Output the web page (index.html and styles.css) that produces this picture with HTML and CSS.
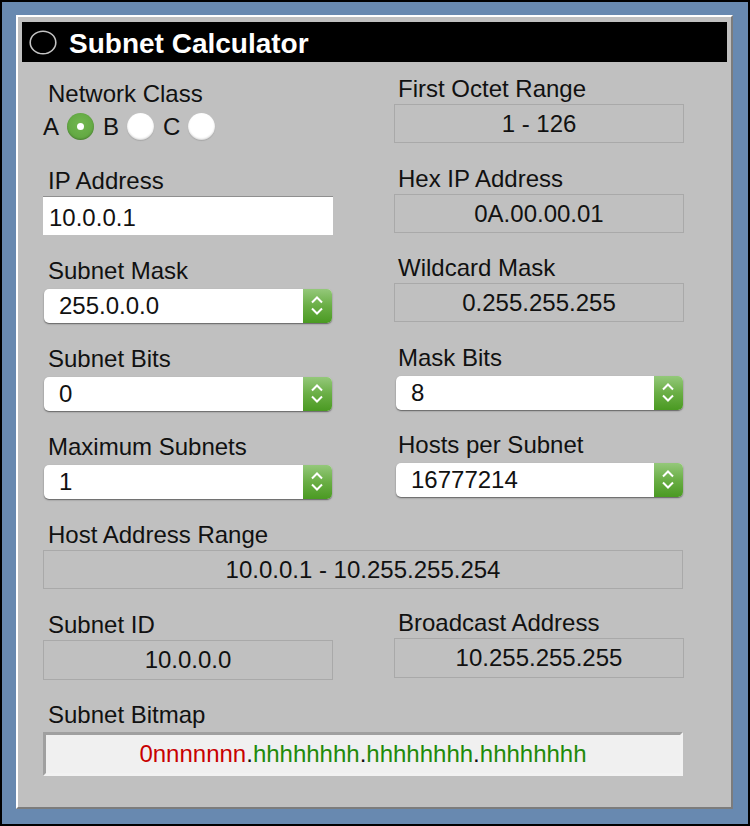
FILE: index.html
```html
<!DOCTYPE html>
<html>
<head>
<meta charset="utf-8">
<title>Subnet Calculator</title>
<link rel="stylesheet" href="styles.css">
</head>
<body>
<div class="frame">
  <div class="panel">
    <div class="header">
      <svg class="logo" width="28" height="25" viewBox="0 0 28 25"><ellipse cx="14" cy="12.5" rx="12.8" ry="11.3" fill="none" stroke="#c4c4c4" stroke-width="1.6"/></svg>
      <span class="title">Subnet Calculator</span>
    </div>
    <div class="content">
      <div class="top">
        <div class="col col-left">
          <div class="field">
            <div class="label">Network Class</div>
            <div class="radios">
              <span class="rlabel">A</span><span class="radio on"></span>
              <span class="rlabel">B</span><span class="radio"></span>
              <span class="rlabel">C</span><span class="radio"></span>
            </div>
          </div>
          <div class="field field-ip">
            <div class="label">IP Address</div>
            <div class="input">10.0.0.1</div>
          </div>
          <div class="field">
            <div class="label">Subnet Mask</div>
            <div class="select"><span class="value">255.0.0.0</span><span class="btn"><svg width="29" height="34" viewBox="0 0 29 34"><path d="M9 13.5 L14 8.5 L19 13.5 M9 19.5 L14 24.5 L19 19.5" fill="none" stroke="#fff" stroke-width="2"/></svg></span></div>
          </div>
          <div class="field">
            <div class="label">Subnet Bits</div>
            <div class="select"><span class="value">0</span><span class="btn"><svg width="29" height="34" viewBox="0 0 29 34"><path d="M9 13.5 L14 8.5 L19 13.5 M9 19.5 L14 24.5 L19 19.5" fill="none" stroke="#fff" stroke-width="2"/></svg></span></div>
          </div>
          <div class="field">
            <div class="label">Maximum Subnets</div>
            <div class="select"><span class="value">1</span><span class="btn"><svg width="29" height="34" viewBox="0 0 29 34"><path d="M9 13.5 L14 8.5 L19 13.5 M9 19.5 L14 24.5 L19 19.5" fill="none" stroke="#fff" stroke-width="2"/></svg></span></div>
          </div>
        </div>
        <div class="col col-right">
          <div class="field">
            <div class="label">First Octet Range</div>
            <div class="output">1 - 126</div>
          </div>
          <div class="field">
            <div class="label">Hex IP Address</div>
            <div class="output">0A.00.00.01</div>
          </div>
          <div class="field">
            <div class="label">Wildcard Mask</div>
            <div class="output">0.255.255.255</div>
          </div>
          <div class="field">
            <div class="label">Mask Bits</div>
            <div class="select select-r"><span class="value">8</span><span class="btn"><svg width="29" height="34" viewBox="0 0 29 34"><path d="M9 13.5 L14 8.5 L19 13.5 M9 19.5 L14 24.5 L19 19.5" fill="none" stroke="#fff" stroke-width="2"/></svg></span></div>
          </div>
          <div class="field">
            <div class="label">Hosts per Subnet</div>
            <div class="select select-r"><span class="value">16777214</span><span class="btn"><svg width="29" height="34" viewBox="0 0 29 34"><path d="M9 13.5 L14 8.5 L19 13.5 M9 19.5 L14 24.5 L19 19.5" fill="none" stroke="#fff" stroke-width="2"/></svg></span></div>
          </div>
        </div>
      </div>
      <div class="field full field-range">
        <div class="label">Host Address Range</div>
        <div class="output">10.0.0.1 - 10.255.255.254</div>
      </div>
      <div class="row2">
        <div class="field half">
          <div class="label">Subnet ID</div>
          <div class="output tall">10.0.0.0</div>
        </div>
        <div class="field half half-r">
          <div class="label">Broadcast Address</div>
          <div class="output tall">10.255.255.255</div>
        </div>
      </div>
      <div class="field full field-bitmap">
        <div class="label">Subnet Bitmap</div>
        <div class="bitmap"><span class="net">0nnnnnnn</span>.<span class="host">hhhhhhhh</span>.<span class="host">hhhhhhhh</span>.<span class="host">hhhhhhhh</span></div>
      </div>
    </div>
  </div>
</div>
</body>
</html>
```

FILE: styles.css
```css
html, body {
  margin: 0;
  padding: 0;
  background: #000;
}
body {
  font-family: "Liberation Sans", Arial, Helvetica, sans-serif;
  color: #111;
}
.frame {
  width: 750px;
  height: 826px;
  box-sizing: border-box;
  border: 2px solid #000;
  background: #6889b0;
  padding: 13px 0 0 14px;
}
.panel {
  width: 717px;
  height: 794px;
  box-sizing: border-box;
  border: 2px solid;
  border-color: #ffffff #7c7c7c #7c7c7c #ffffff;
  background: #c0c0c0;
  padding: 5px 4px 0 4px;
}
.header {
  height: 40px;
  background: #000;
  display: flex;
  align-items: center;
  padding-left: 7px;
}
.logo {
  display: block;
}
.title {
  color: #fff;
  font-weight: bold;
  font-size: 28px;
  line-height: 36px;
  padding-top: 4px;
  margin-left: 12px;
}
.content {
  padding-left: 21px;
}
.top {
  display: flex;
  gap: 61px;
  margin-top: 15px;
}
.col {
  width: 290px;
  display: flex;
  flex-direction: column;
}
.col-left {
  padding-top: 5px;
  gap: 24px;
}
.col-right {
  gap: 23.5px;
}
.field-ip {
  margin-top: 5px;
}
.label {
  font-size: 24px;
  line-height: 24px;
  height: 24px;
  padding-left: 5px;
  white-space: nowrap;
}
.col-right .label, .half-r .label {
  padding-left: 4px;
}
.radios {
  display: flex;
  align-items: center;
  height: 27px;
  margin-top: 7px;
  font-size: 24px;
}
.rlabel {
  line-height: 27px;
}
.radio {
  width: 27px;
  height: 27px;
  border-radius: 50%;
  box-sizing: border-box;
  background: #fff;
  box-shadow: inset 0 -1px 2px rgba(0,0,0,0.18), 0 1px 1px rgba(0,0,0,0.12);
  margin: 0 9px 0 8px;
  position: relative;
}
.radio.on {
  background: radial-gradient(circle at 50% 40%, #72b650 0%, #62a842 70%, #57993a 100%);
  box-shadow: inset 0 -1px 2px rgba(0,0,0,0.25);
}
.radio.on::after {
  content: "";
  position: absolute;
  left: 10px;
  top: 10px;
  width: 7px;
  height: 7px;
  border-radius: 50%;
  background: #fff;
}
.input {
  margin-top: 3px;
  height: 39px;
  box-sizing: border-box;
  background: #fff;
  border-top: 1px solid #8f8f8f;
  font-size: 24px;
  line-height: 24px;
  padding: 9px 0 0 6px;
}
.select {
  margin-top: 6px;
  margin-left: 1px;
  width: 288px;
  height: 34px;
  background: #fff;
  border-radius: 5px;
  box-shadow: 0 1px 1.5px rgba(0,0,0,0.5);
  display: flex;
  align-items: center;
  font-size: 24px;
}
.select-r {
  margin-left: 2px;
  width: 287px;
}
.value {
  flex: 1;
  padding-left: 15px;
  line-height: 34px;
}
.btn {
  width: 29px;
  height: 34px;
  border-radius: 0 5px 5px 0;
  background: linear-gradient(#94c87a, #6aae45 50%, #4a9a22);
}
.btn svg {
  display: block;
}
.output {
  margin-top: 3px;
  height: 39px;
  box-sizing: border-box;
  border: 1px solid #a9a9a9;
  font-size: 24px;
  line-height: 37px;
  text-align: center;
}
.output.tall {
  height: 40px;
  line-height: 38px;
}
.full {
  width: 640px;
}
.field-range {
  margin-top: 24px;
}
.row2 {
  display: flex;
  align-items: flex-start;
  gap: 61px;
  margin-top: 24px;
}
.half {
  width: 290px;
}
.half-r {
  margin-top: -2px;
}
.field-bitmap {
  margin-top: 23px;
}
.bitmap {
  margin-top: 5px;
  height: 44px;
  box-sizing: border-box;
  border: 3px solid;
  border-color: #a0a0a0 #f2f2f2 #f2f2f2 #a0a0a0;
  background: #f0f0f0;
  font-size: 24px;
  line-height: 38px;
  text-align: center;
  color: #111;
}
.net {
  color: #c80000;
}
.host {
  color: #1f8a0a;
}
```
